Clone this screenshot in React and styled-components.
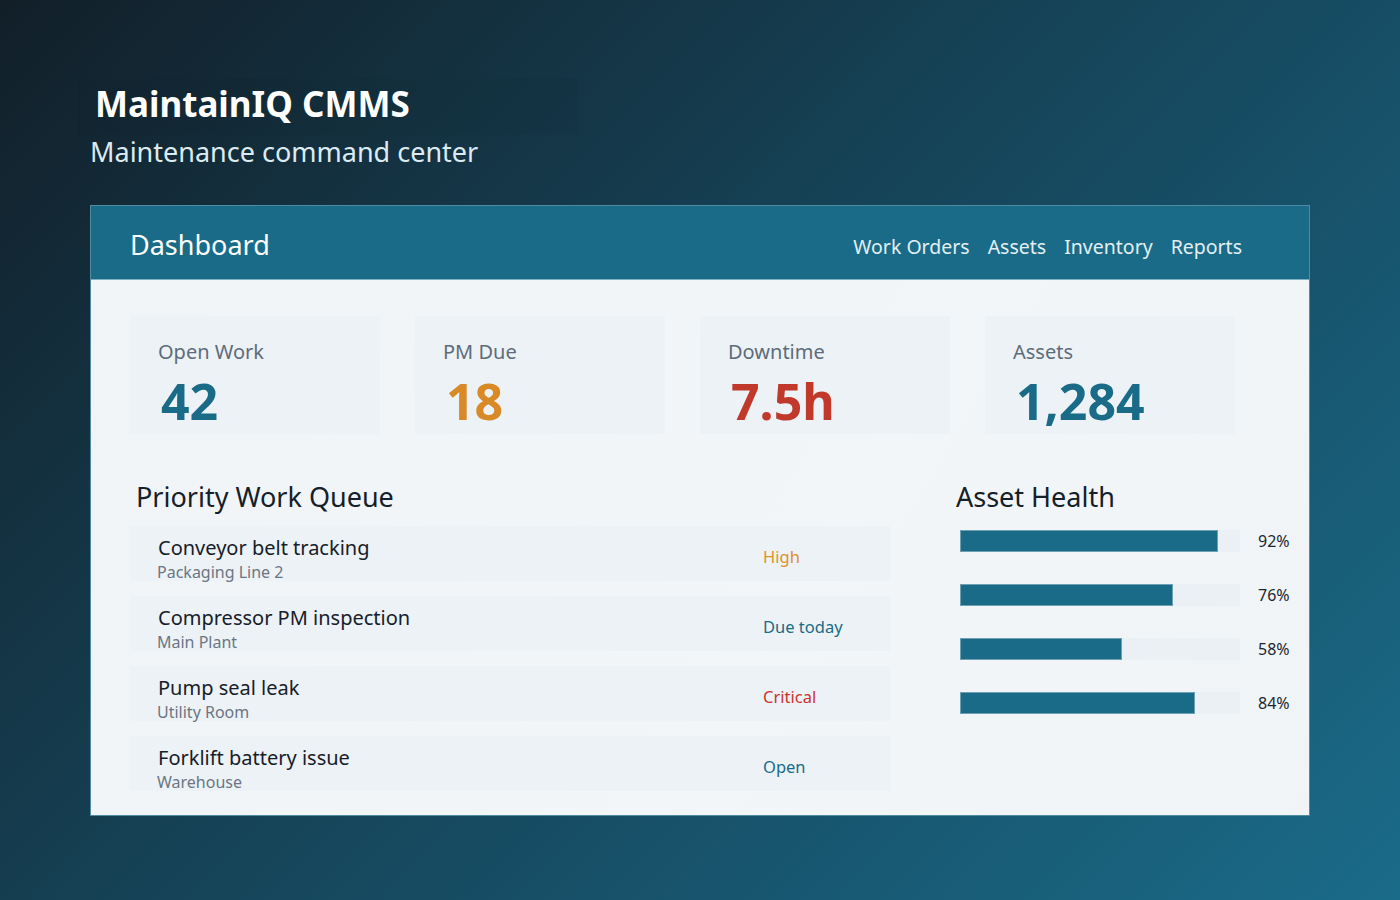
import React from "react";
import styled, { createGlobalStyle } from "styled-components";

const stats = [
  { label: "Open Work", value: "42", tone: "#1a6b87" },
  { label: "PM Due", value: "18", tone: "#d98a26" },
  { label: "Downtime", value: "7.5h", tone: "#c0392b" },
  { label: "Assets", value: "1,284", tone: "#1a6b87" },
];

const queue = [
  { title: "Conveyor belt tracking", place: "Packaging Line 2", status: "High", tone: "#e0911f" },
  { title: "Compressor PM inspection", place: "Main Plant", status: "Due today", tone: "#1a6b87" },
  { title: "Pump seal leak", place: "Utility Room", status: "Critical", tone: "#c9352a" },
  { title: "Forklift battery issue", place: "Warehouse", status: "Open", tone: "#1a6b87" },
];

const health = [92, 76, 58, 84];

const GlobalStyle = createGlobalStyle`
  * { box-sizing: border-box; }
  body {
    margin: 0;
    font-family: "Noto Sans", "Open Sans", sans-serif;
  }
`;

const Page = styled.div`
  min-height: 900px;
  padding: 78px 90px;
  background: linear-gradient(135deg, #121f29 0%, #16465b 50%, #1a6b89 100%);
`;

const BrandBox = styled.div`
  display: inline-block;
  width: 500px;
  margin-left: -12px;
  padding: 3px 16px 9px;
  background: rgba(6, 18, 28, 0.04);
  border-left: 1px solid rgba(6, 18, 28, 0.08);
`;

const Title = styled.h1`
  margin: 0;
  font-size: 35px;
  line-height: 45px;
  font-weight: 700;
  color: #ffffff;
`;

const Subtitle = styled.div`
  font-size: 27px;
  line-height: 34px;
  color: #dcebf2;
`;

const Panel = styled.section`
  margin-top: 36px;
  width: 1220px;
  border: 1px solid #4f8ca3;
  background: linear-gradient(120deg, #f1f4f7 0%, #f3f6f8 60%, #f1f4f7 100%);
`;

const Header = styled.header`
  height: 74px;
  display: flex;
  align-items: center;
  justify-content: space-between;
  padding: 8px 67px 0 39px;
  background: #1a6b87;
  border-bottom: 1px solid #7fb0c2;
`;

const HeaderTitle = styled.h2`
  margin: 0 0 4px;
  font-size: 27px;
  font-weight: 400;
  color: #ffffff;
`;

const Nav = styled.nav`
  display: flex;
  gap: 18px;
`;

const NavLink = styled.a`
  font-size: 19.5px;
  color: #e3eff4;
  text-decoration: none;
`;

const Body = styled.div`
  padding: 36px 39px 24px;
`;

const StatGrid = styled.div`
  display: grid;
  grid-template-columns: repeat(4, 250px);
  gap: 35px;
`;

const StatCard = styled.div`
  height: 118px;
  padding: 22px 28px 0;
  background: #edf2f7;
`;

const StatLabel = styled.div`
  font-size: 20px;
  line-height: 27px;
  color: #5d6c7b;
`;

const StatValue = styled.div`
  margin-top: 8px;
  margin-left: 3px;
  font-size: 50px;
  line-height: 56px;
  font-weight: 700;
  color: ${(p) => p.$tone};
`;

const Columns = styled.div`
  display: grid;
  grid-template-columns: 760px 1fr;
  gap: 66px;
  margin-top: 45px;
`;

const SectionTitle = styled.h3`
  margin: 0 0 11px;
  padding-left: ${(p) => (p.$indent ? "6px" : "0")};
  font-size: 27px;
  line-height: 36px;
  font-weight: 400;
  color: #14202a;
`;

const QueueList = styled.div`
  display: flex;
  flex-direction: column;
  gap: 15px;
`;

const QueueRow = styled.div`
  height: 55px;
  display: grid;
  grid-template-columns: 1fr 127px;
  padding-left: 28px;
  background: #edf2f7;
`;

const QueueText = styled.div`
  padding-top: 8px;
`;

const QueueTitle = styled.div`
  font-size: 20px;
  line-height: 27px;
  color: #16202a;
`;

const QueuePlace = styled.div`
  margin-left: -1px;
  font-size: 16px;
  line-height: 22px;
  color: #6a7683;
`;

const Status = styled.div`
  align-self: center;
  padding-top: 4px;
  font-size: 16.5px;
  color: ${(p) => p.$tone};
`;

const HealthList = styled.div`
  display: flex;
  flex-direction: column;
  gap: 32px;
  padding: 4px 0 0 4px;
`;

const HealthRow = styled.div`
  display: flex;
  align-items: center;
  gap: 18px;
`;

const Track = styled.div`
  width: 280px;
  height: 22px;
  background: #ebf0f5;
`;

const Fill = styled.div`
  height: 100%;
  background: #1a6b87;
  border: 1px solid #6e9fb3;
`;

const Percent = styled.span`
  font-size: 16px;
  color: #1c2630;
`;

export default function App() {
  return (
    <>
      <GlobalStyle />
      <Page>
        <BrandBox>
          <Title>MaintainIQ CMMS</Title>
        </BrandBox>
        <Subtitle>Maintenance command center</Subtitle>

        <Panel>
          <Header>
            <HeaderTitle>Dashboard</HeaderTitle>
            <Nav>
              <NavLink href="#">Work Orders</NavLink>
              <NavLink href="#">Assets</NavLink>
              <NavLink href="#">Inventory</NavLink>
              <NavLink href="#">Reports</NavLink>
            </Nav>
          </Header>

          <Body>
            <StatGrid>
              {stats.map((s) => (
                <StatCard key={s.label}>
                  <StatLabel>{s.label}</StatLabel>
                  <StatValue $tone={s.tone}>{s.value}</StatValue>
                </StatCard>
              ))}
            </StatGrid>

            <Columns>
              <div>
                <SectionTitle $indent>Priority Work Queue</SectionTitle>
                <QueueList>
                  {queue.map((q) => (
                    <QueueRow key={q.title}>
                      <QueueText>
                        <QueueTitle>{q.title}</QueueTitle>
                        <QueuePlace>{q.place}</QueuePlace>
                      </QueueText>
                      <Status $tone={q.tone}>{q.status}</Status>
                    </QueueRow>
                  ))}
                </QueueList>
              </div>

              <div>
                <SectionTitle>Asset Health</SectionTitle>
                <HealthList>
                  {health.map((h, i) => (
                    <HealthRow key={i}>
                      <Track>
                        <Fill style={{ width: `${h}%` }} />
                      </Track>
                      <Percent>{h}%</Percent>
                    </HealthRow>
                  ))}
                </HealthList>
              </div>
            </Columns>
          </Body>
        </Panel>
      </Page>
    </>
  );
}
